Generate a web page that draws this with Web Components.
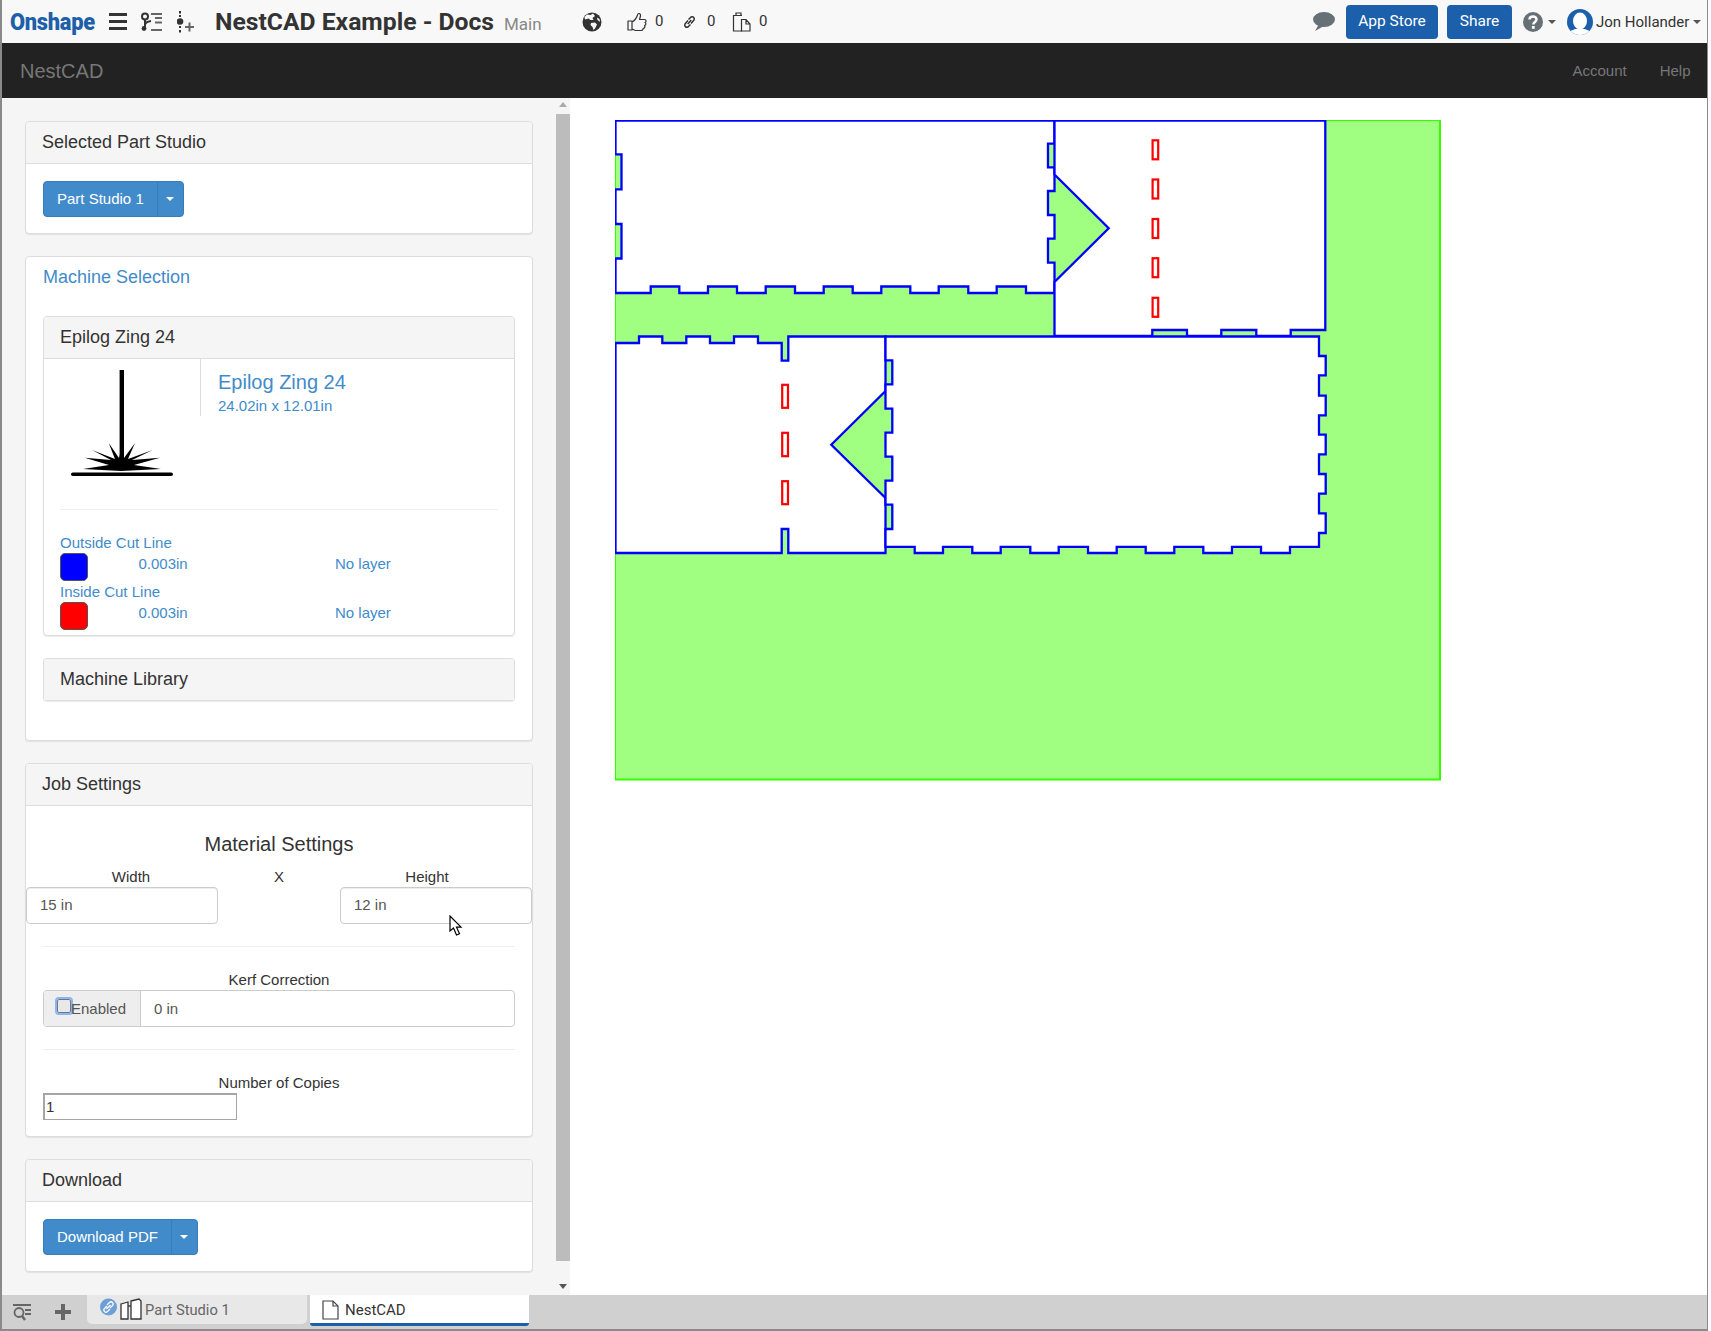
<!DOCTYPE html>
<html lang="en"><head><meta charset="utf-8"><title>NestCAD</title>
<style>html,body{margin:0;padding:0;background:#fff}</style></head><body>
<x-app></x-app>
<script>
const SANS='"Liberation Sans",Arial,sans-serif', DIN='Roboto,"Noto Sans",sans-serif';
function def(name,html){
  class E extends HTMLElement{
    constructor(){super();const r=this.attachShadow({mode:'open'});r.innerHTML=typeof html==='function'?html(this):html;}
  }
  customElements.define(name,E);
}
def('x-panel',el=>`<style>
:host{display:block;background:#fff;border:1px solid #ddd;border-radius:4px;box-shadow:0 1px 1px rgba(0,0,0,.08);margin-bottom:22px}
.h{height:41px;line-height:40px;padding:0 16px;background:#f5f5f5;border-bottom:1px solid #ddd;border-radius:3px 3px 0 0;font-size:18px;color:#333}
:host([nobody]) .h{border-bottom:0;height:41px}
.b{padding:var(--pad,17px 16px 16px 17px)}
:host([nobody]) .b{display:none}
</style><div class="h">${el.getAttribute('heading')}</div><div class="b"><slot></slot></div>`);

def('x-split',el=>`<style>
:host{display:inline-flex;height:36px;color:#fff;font-size:15px;line-height:34px}
.a,.c{background:#428bca;border:1px solid #357ebd;box-sizing:border-box}
.a{padding:0 13px;border-radius:4px 0 0 4px}
.c{width:27px;margin-left:-1px;border-radius:0 4px 4px 0;display:flex;align-items:center;justify-content:center}
i{border:4px solid transparent;border-top-color:#fff;border-bottom:0;display:block}
</style><div class="a">${el.getAttribute('label')}</div><div class="c"><i></i></div>`);

def('x-cut-row',el=>`<style>
:host{display:block;color:#428bca;font-size:15px;line-height:20px;margin-bottom:1px}
.g{display:grid;grid-template-columns:78.5px 196.5px 1fr}
.s{width:28px;height:28px;box-sizing:border-box;border-radius:5px;border:1px solid #555;background:${el.getAttribute('color')}}
.v{padding-top:1px}
</style><div>${el.getAttribute('label')}</div><div class="g"><div class="s"></div><div class="v">0.003in</div><div class="v">No layer</div></div>`);

def('x-field',`<style>
:host{display:block;box-sizing:border-box;height:37px;line-height:34px;border:1px solid #ccc;border-radius:4px;padding:0 13px;color:#555;background:#fff;font-size:15px;box-shadow:inset 0 1px 1px rgba(0,0,0,.075)}
</style><slot></slot>`);

def('x-label',`<style>:host{display:block;text-align:center;font-size:15px;line-height:20px;color:#333}</style><slot></slot>`);
def('x-rule',`<style>:host{display:block;height:1px;background:#eee;margin:22px 0 20px}</style>`);

def('x-machine-card',`<style>
:host{display:block;border:1px solid #ddd;border-radius:4px;box-shadow:0 1px 1px rgba(0,0,0,.08);background:#fff}
.h{height:41px;line-height:40px;padding:0 16px;background:#f5f5f5;border-bottom:1px solid #ddd;font-size:18px;color:#333;border-radius:3px 3px 0 0}
.m{display:flex;height:150px}
.i{width:156px;padding-top:11px;box-sizing:border-box;padding-left:27px}
.t{border-left:1px solid #ddd;height:57px;padding-left:17px;color:#428bca;box-sizing:border-box}
.t b{display:block;font-weight:400;font-size:20px;line-height:22px;padding-top:12px}
.t span{display:block;font-size:15px;line-height:20px;padding-top:3px}
hr{border:0;height:1px;background:#eee;margin:0 16px 23px 16px}
.r{padding:0 16px 4px}
svg{display:block}
</style><div class="h">Epilog Zing 24</div>
<div class="m"><div class="i"><svg width="102" height="107" viewBox="0 0 102 107"><rect x="48.6" width="4.4" height="100" fill="#000"/><polygon fill="#000" points="12,99 38,95 13.7,87.700 40,90 21,80 44,89 37.7,73 48,88 50,80 53,88 64,73 57,89 81.7,80 61,90 89,87.700 63,95 90,99 50,101"/><rect x="0" y="102.5" width="102" height="3.6" rx="1.8" fill="#000"/></svg></div>
<div class="t"><b>Epilog Zing 24</b><span>24.02in x 12.01in</span></div></div>
<hr><div class="r"><x-cut-row label="Outside Cut Line" color="#0000ff"></x-cut-row><x-cut-row label="Inside Cut Line" color="#ff0000"></x-cut-row></div>`);

def('x-sheet',`<style>:host{display:block;width:827px;height:662px}svg{display:block}</style>
<svg width="827" height="662" viewBox="615 120 827 662">
<rect x="615" y="120" width="825" height="659.500" fill="#a0ff80" stroke="#33ff00" stroke-width="2"/>
<g fill="#fff" stroke="#0000ff" stroke-width="2.300" stroke-linejoin="miter">
<path d="M615.5 120.5H1054.5V143.7H1048V167.3H1054.5V191H1048V215H1054.5V238.7H1048V262.7H1054.5V293H1026V286.5H996.7V293H968.3V286.5H938.7V293H910.3V286.5H881.3V293H852.7V286.5H823.7V293H795V286.5H765.7V293H737V286.5H708V293H679.3V286.5H650.7V293H615.5V258.5H621.5V224H615.5V189.3H621.5V154.3H615.5Z"/>
<path d="M1054.5 120.5H1325.3V330H1290.7V336H1256.3V330H1221.3V336H1187V330H1152.3V336H1054.5V282L1108.7 228.3L1054.5 174.500Z"/>
<path d="M615.5 343H639V336.500H662.3V343H686.3V336.500H710V343H734V336.500H758V343H781.7V360.7H788.3V336.500H885.5V391L831.3 444.7L885.5 498V553H788.3V529H781.7V553H615.5Z"/>
<path d="M885.5 336.500H1319V356H1325.7V375.3H1319V395.7H1325.7V415.3H1319V434.7H1325.7V454.3H1319V474H1325.7V493.7H1319V513.3H1325.7V533H1319V546.800H1290V553H1261V546.800H1232V553H1203.3V546.800H1174.3V553H1145.7V546.800H1116.7V553H1088V546.800H1058.7V553H1030.3V546.800H1000.7V553H972.3V546.800H943V553H914.7V546.800H885.5V529H892.3V504.7H885.5V480.7H892.3V456.7H885.5V432.7H892.3V408.7H885.5V384.3H892.3V360.3H885.5Z"/>
</g>
<g fill="#fff" stroke="#ff0000" stroke-width="2.200">
<rect x="1152.6" y="140.3" width="5.6" height="19"/><rect x="1152.6" y="179.5" width="5.6" height="19"/><rect x="1152.6" y="219" width="5.6" height="19"/><rect x="1152.6" y="258.2" width="5.6" height="19"/><rect x="1152.6" y="297.8" width="5.6" height="19"/>
<rect x="782.2" y="384.8" width="5.8" height="23"/><rect x="782.2" y="432.8" width="5.8" height="23.4"/><rect x="782.2" y="481.2" width="5.8" height="23"/>
</g></svg>`);

def('x-sidebar',`<style>
:host{display:flex;width:568px;flex:none;background:#f5f5f5;overflow:hidden;font-family:${SANS};color:#333}
.c{width:508px;padding:23px 0 0 23px;box-sizing:content-box;margin-right:23px;flex:none}
.sb{width:14px;display:flex;flex-direction:column;align-items:center;background:#f5f5f5}
.sb i{display:block;width:0;border:4px solid transparent}
.up{border-top:0!important;border-bottom:5px solid #aaa!important;margin:4px 0 7px}
.th{width:14px;height:1147px;background:#bcbcbc}
.dn{border-bottom:0!important;border-top:5px solid #555!important;margin-top:23px}
.mat{font-size:20px;line-height:22px;text-align:center;padding-top:27px;margin-bottom:12px;color:#333}
.dim{display:grid;grid-template-columns:210px 86px 210px}
.w{width:192px}
.r{justify-self:end}
.hrpad{margin:0 17px}
.grp{display:flex;height:37px;box-sizing:border-box;border:1px solid #ccc;border-radius:4px;color:#555;font-size:15px;line-height:35px}
.ad{width:97px;flex:none;box-sizing:border-box;background:#eee;border-right:1px solid #ccc;padding-left:13px;display:flex;align-items:center;border-radius:3px 0 0 3px}
.cb{width:12px;height:12px;flex:none;margin-top:-5px;background:#e8e8e8;border:1px solid #777;border-radius:2px;outline:2px solid #8ab4f8;outline-offset:0}
.iv{padding-left:13px}
.num{width:194px;height:27px;box-sizing:border-box;border:1px solid #a5a5a5;border-width:2px 1px 1px 2px;line-height:24px;font-size:15px;padding-left:1px;color:#333;background:#fff}
</style>
<div class="c">
<x-panel heading="Selected Part Studio"><x-split label="Part Studio 1"></x-split></x-panel>
<x-machine-panel></x-machine-panel>
<x-panel heading="Job Settings" style="--pad:0 0 16px 0">
  <div class="mat">Material Settings</div>
  <div class="dim"><x-label>Width</x-label><x-label>X</x-label><x-label>Height</x-label>
  <x-field class="w">15 in</x-field><span></span><x-field class="w r">12 in</x-field></div>
  <div class="hrpad"><x-rule></x-rule><x-label style="margin-top:23px">Kerf Correction</x-label>
  <div class="grp"><div class="ad"><span class="cb"></span><span>Enabled</span></div><div class="iv">0 in</div></div>
  <x-rule></x-rule><x-label style="margin-top:23px">Number of Copies</x-label><div class="num">1</div></div>
</x-panel>
<x-panel heading="Download"><x-split label="Download PDF"></x-split></x-panel>
</div>
<div class="sb"><i class="up"></i><div class="th"></div><i class="dn"></i></div>`);

def('x-machine-panel',`<style>
:host{display:block;background:#fff;border:1px solid #ddd;border-radius:4px;box-shadow:0 1px 1px rgba(0,0,0,.08);margin-bottom:22px;height:485px;box-sizing:border-box}
.title{color:#428bca;font-size:18px;line-height:20px;padding:10px 15px 0 17px;margin-bottom:29px}
.in{padding:0 17px}
x-panel{margin-bottom:0;margin-top:22px}
</style><div class="title">Machine Selection</div><div class="in"><x-machine-card></x-machine-card><x-panel heading="Machine Library" nobody></x-panel></div>`);

def('x-topbar',`<style>
:host{display:flex;align-items:center;height:43px;background:#f8f8f8;flex:none;font-family:${DIN};color:#333}
svg{display:block;flex:none}
.logo{width:85px;margin-left:8px;margin-right:-1px;flex:none;color:#1d5fa8;font-weight:900;font-size:24px;line-height:28px;white-space:nowrap;transform-origin:left center;transform:scaleX(.91);letter-spacing:-.3px}
.title{width:279px;margin-left:21px;flex:none;font-size:24.7px;font-weight:700;white-space:nowrap;color:#333}
.main{width:37px;margin-left:10px;flex:none;font-size:17px;color:#888;padding-top:5px}
.n{font-size:15px;color:#333;flex:none;width:10px;margin-top:-2px}
.sp{flex:1}
.btn{flex:none;height:34px;line-height:33px;background:#1c5fab;color:#fff;border-radius:4px;text-align:center;font-size:15.500px;font-weight:400}
.car{border:4px solid transparent;border-top-color:#555;border-bottom:0;flex:none}
.user{width:93px;margin-left:3px;flex:none;font-size:15px;white-space:nowrap;color:#333}
</style>
<div class="logo">Onshape</div>
<svg style="margin-left:15px" width="18" height="18" viewBox="0 0 18 18" fill="#333"><rect y="0" width="18" height="3"/><rect y="7" width="18" height="3"/><rect y="14" width="18" height="3"/></svg>
<svg style="margin-left:13px" width="22" height="20" viewBox="0 0 22 20"><g fill="none" stroke="#333" stroke-width="2"><circle cx="5" cy="4.5" r="3"/><path d="M5 8v7M5 13q0-3 6-4"/></g><circle cx="4" cy="16.5" r="2.4" fill="#333"/><g fill="#666"><rect x="11" y="1" width="11" height="2"/><rect x="15" y="5" width="7" height="2"/><rect x="15" y="9.500" width="7" height="2"/><rect x="11" y="17" width="11" height="2"/></g></svg>
<svg style="margin-left:15px" width="17" height="22" viewBox="0 0 17 22"><g fill="#333"><rect x="2" y="0" width="2" height="2.500"/><rect x="2" y="4" width="2" height="2"/><circle cx="3" cy="10.500" r="3.300"/><rect x="2" y="15" width="2" height="2"/><rect x="2" y="19" width="2" height="2.500"/></g><g fill="#666"><rect x="8" y="15" width="9" height="2"/><rect x="11.500" y="11.500" width="2" height="9"/></g></svg>
<div class="title">NestCAD Example - Docs</div><div class="main">Main</div>
<svg style="margin-left:41px" width="20" height="20" viewBox="0 0 20 20"><circle cx="10" cy="10" r="9.500" fill="#333"/><path fill="#f8f8f8" d="M5 2.500 8.500 3 11 1.500 13 4 10.500 6 11.500 8 8.500 8 6.500 6.500 3 7.500 2.500 5ZM9 11 13 10.500 15 12.500 13 16.500 11.500 18 10.500 15 8.500 13ZM15 5.500 17.500 7 18 10 15.500 8Z"/></svg>
<svg style="margin-left:25px" width="20" height="20" viewBox="0 0 20 20" fill="none" stroke="#333" stroke-width="1.200" stroke-linejoin="round"><path d="M1 9H5V18H1ZM5 10C7 9 9.500 6 10.500 3 11 .8 14 1 13.500 4L12.500 7.500H17.500C19.500 7.500 19.500 10 18 10.500 19.500 11 19 13.500 17.500 13.500 18.500 14.500 17.500 16.500 16 16.500 16.500 18 15 18.500 14 18.500H9C7 18.500 6 17 5 17"/></svg>
<div class="n" style="margin-left:8px">0</div>
<svg style="margin-left:18px" width="13" height="14" viewBox="0 0 13 14" fill="none" stroke="#333" stroke-width="1.500"><path d="M5.500 4.500 8 2a2.200 2.200 0 0 1 3 3L8 8.500"/><path d="M7.500 9.500 5 12a2.200 2.200 0 0 1-3-3L5 5.500"/><path d="M4.800 9 8.200 5"/></svg>
<div class="n" style="margin-left:11px">0</div>
<svg style="margin-left:15px" width="19" height="20" viewBox="0 0 19 20" fill="none" stroke="#333" stroke-width="1.200"><path d="M10 3.500H1.500V19H10"/><path d="M4 3.500V1H9V3.500"/><path d="M9.500 7.500V19H18V12L14 7.500ZM14 7.500V12H18"/></svg>
<div class="n" style="margin-left:8px">0</div>
<div class="sp"></div>
<svg width="22" height="19" viewBox="0 0 22 19" fill="#667077"><ellipse cx="11" cy="7.500" rx="11" ry="7.500"/><path d="M6 12 2 19 11 14Z"/></svg>
<div class="btn" style="margin-left:11px;width:92px">App Store</div>
<div class="btn" style="margin-left:9px;width:65px">Share</div>
<svg style="margin-left:11px" width="20" height="20" viewBox="0 0 20 20"><circle cx="10" cy="10" r="10" fill="#667077"/><path d="M6.500 7.500C6.700 3.500 13.500 3.500 13.500 7.500 13.500 10 10.300 10 10.300 12.500" fill="none" stroke="#fff" stroke-width="2.500"/><rect x="8.900" y="14" width="2.800" height="2.800" fill="#fff"/></svg>
<i class="car" style="margin-left:5px"></i>
<svg style="margin-left:11px" width="26" height="26" viewBox="0 0 26 26"><defs><clipPath id="av"><circle cx="13" cy="13" r="13"/></clipPath></defs><circle cx="13" cy="13" r="13" fill="#1c5fab"/><g clip-path="url(#av)" fill="#fff"><ellipse cx="13" cy="12" rx="7" ry="8.500"/><ellipse cx="13" cy="26" rx="12" ry="6.500"/></g></svg>
<div class="user">Jon Hollander</div>
<i class="car" style="margin-left:4px;margin-right:6px"></i>`);

def('x-navbar',`<style>
:host{display:flex;justify-content:space-between;align-items:center;height:55px;background:#222;color:#777;flex:none;font-family:${SANS};padding:0 16.500px 0 18px;font-size:15px}
b{font-weight:400;font-size:20px;padding-top:2px}
a{margin-left:33px;color:#777}
</style><b>NestCAD</b><div><a>Account</a><a>Help</a></div>`);

def('x-tabbar',`<style>
:host{display:flex;height:34px;background:#d0d0d0;flex:none;font-family:${DIN};font-size:15px;color:#666;box-sizing:border-box}
svg{display:block;flex:none}
.t{height:29px;display:flex;align-items:center;flex:none;box-sizing:border-box}
.a{margin-left:16px;width:220px;background:#e8e8e8;border-radius:0 0 5px 5px;padding-left:13px;font-size:14.700px}
.b{margin-left:3px;width:219px;background:#fff;border-bottom:3px solid #1c5fab;height:31px;border-radius:0 0 3px 3px;padding-left:12px;color:#333;padding-top:1px}
</style>
<svg style="margin:8px 0 0 11px" width="18" height="18" viewBox="0 0 18 18" fill="none" stroke="#666" stroke-width="1.800"><path d="M0 2H18M12 7H18M12 11H18"/><circle cx="6" cy="9.500" r="4.500"/><path d="M9 13l3 4" stroke-width="2.500"/></svg>
<svg style="margin:9px 0 0 24px" width="16" height="16" viewBox="0 0 16 16" fill="#666"><rect x="0" y="6" width="16" height="4"/><rect x="6" y="0" width="4" height="16"/></svg>
<div class="t a"><svg width="17" height="18" viewBox="0 0 17 18" style="margin-top:-5px"><circle cx="8.500" cy="9" r="8.500" fill="#6d9fd6"/><path d="M7 7l2.500-2.500a2 2 0 0 1 3 3L10 10M10 11l-2.500 2.500a2 2 0 0 1-3-3L7 8M6.500 11l4-4" fill="none" stroke="#fff" stroke-width="1.200"/></svg>
<svg style="margin:-2px 0 0 3px" width="22" height="22" viewBox="0 0 22 22" fill="#fff" stroke="#333" stroke-width="1.300"><path d="M1 6 8 4V21H1Z"/><path d="M11 3 19 1 21 3V21H11Z"/><path d="M8 8H11" /></svg>
<span style="margin-left:3px">Part Studio 1</span></div>
<div class="t b"><svg width="17" height="20" viewBox="0 0 17 20" fill="#fff" stroke="#444" stroke-width="1.200"><path d="M1 1H11L16 6V19H1Z"/><path d="M11 1V6H16" fill="none"/></svg><span style="margin-left:6px">NestCAD</span></div>`);

def('x-app',`<style>
:host{display:flex;flex-direction:column;position:relative;box-sizing:border-box;width:1708px;height:1331px;border-left:2px solid #8a8a8a;border-right:1px solid #8a8a8a;border-bottom:2px solid #8a8a8a;overflow:hidden}
.m{flex:1;display:flex;min-height:0}
.cv{flex:1;padding:22px 0 0 45px;background:#fff}
.cur{position:absolute;left:447px;top:915px}
</style>
<x-topbar></x-topbar><x-navbar></x-navbar>
<div class="m"><x-sidebar></x-sidebar><div class="cv"><x-sheet></x-sheet></div></div>
<x-tabbar></x-tabbar>
<svg class="cur" width="16" height="22" viewBox="0 0 16 22"><path d="M1 1V16L4.500 13 7.500 20 10.500 18.800 7.500 12.200H12Z" fill="#fff" stroke="#000" stroke-width="1.200"/></svg>`);
</script></body></html>
